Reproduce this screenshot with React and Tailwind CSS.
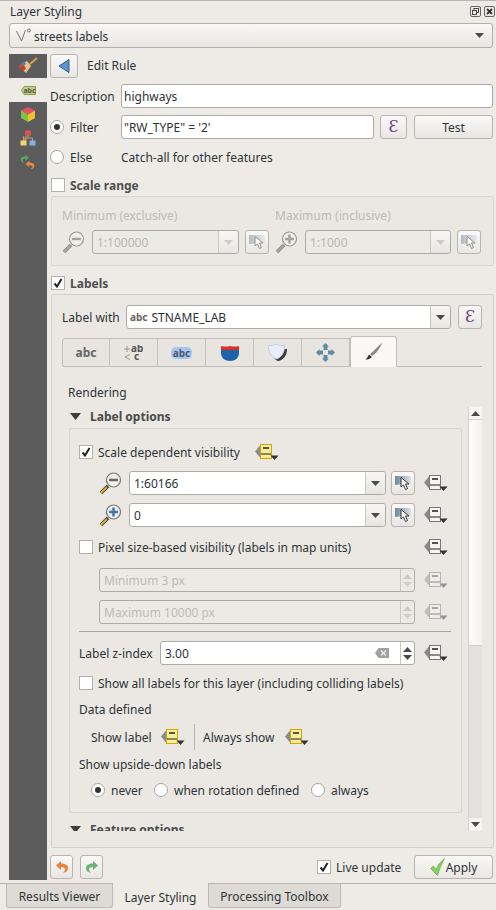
import React from "react";

const TEXT = "text-[#2e3436]";

const Caret = ({ dim }) => (
  <svg width="9" height="5" viewBox="0 0 9 5"><path d="M0 0h9L4.500 5z" fill={dim ? "#cfccc8" : "#4a4a4a"} /></svg>
);

const SectionCaret = () => (
  <svg width="11" height="7" viewBox="0 0 11 7" className="shrink-0"><path d="M0 0h11L5.500 7z" fill="#3d3d3d" /></svg>
);

const Button = ({ className = "", children }) => (
  <div className={`flex items-center justify-center rounded-[3px] border border-[#b8b5b0] bg-gradient-to-b from-[#faf9f8] to-[#e9e6e2] ${className}`}>
    {children}
  </div>
);

const Epsilon = ({ className = "" }) => (
  <Button className={`h-6 shrink-0 font-['DejaVu_Serif',serif] text-[16px] leading-none text-[#6b3f7f] ${className}`}>Ɛ</Button>
);

const Checkbox = ({ checked }) => (
  <div className="flex h-[14px] w-[14px] shrink-0 items-center justify-center border border-[#b5b2ad] bg-white">
    {checked && (
      <svg width="10" height="10" viewBox="0 0 10 10"><path d="M1.500 5.500 4 8.500 8.500 1" fill="none" stroke="#222" strokeWidth="2" /></svg>
    )}
  </div>
);

const Radio = ({ checked }) => (
  <div className="flex h-[14px] w-[14px] shrink-0 items-center justify-center rounded-full border border-[#aaa7a2] bg-white">
    {checked && <div className="h-[6px] w-[6px] rounded-full bg-[#333]" />}
  </div>
);

const ZoomIcon = ({ plus, muted }) => {
  const handle = muted ? "#a8a6a2" : "#e0b020";
  const ring = muted ? "#9a9894" : "#777";
  const sign = muted ? "#a5a39f" : plus ? "#3d78b0" : "#666";
  return (
    <svg width="23" height="24" viewBox="0 0 23 24" className="shrink-0">
      <path d="M2 22 9 15" stroke={muted ? "#8f8d89" : "#333"} strokeWidth="3.500" />
      <path d="M2 22 8 16" stroke={handle} strokeWidth="2" />
      <circle cx="14.500" cy="9" r="7" fill="#f1efec" stroke={ring} strokeWidth="1.200" />
      <path d="M10 9h9" stroke={sign} strokeWidth="2.500" />
      {plus && <path d="M14.500 4.500v9" stroke={sign} strokeWidth="2.500" />}
    </svg>
  );
};

const PickIcon = ({ muted }) => (
  <svg width="17" height="14" viewBox="0 0 17 14" className={muted ? "opacity-50" : ""}>
    <defs>
      <linearGradient id="pickfade" x1="0" x2="1" y1="0" y2="0">
        <stop offset="0" stopColor="#6f8899" />
        <stop offset="1" stopColor="#dfe3e5" />
      </linearGradient>
    </defs>
    <path d="M0 0h16v8H9L0 9z" fill="url(#pickfade)" />
    <path d="M6 1.500 6 11l2.500-2 2 4.500 2-1L10.500 8H14z" fill="#fff" stroke="#333" strokeWidth="1" />
  </svg>
);

const DataDefined = ({ yellow, muted, className = "" }) => (
  <svg width="24" height="17" viewBox="0 0 24 17" className={`shrink-0 ${muted ? "opacity-45" : ""} ${className}`}>
    <path d="M5 1.500v12L0 7.500z" fill="#8a8a8a" />
    <rect x="5.500" y="0.500" width="11" height="14" fill={yellow ? "#f8ee9a" : "#f6f5f3"} stroke={yellow ? "#d2a500" : "#777"} />
    <path d="M8 4h6" stroke="#555" strokeWidth="2" />
    <path d="M6 10h10" stroke="#444" strokeWidth="1.200" />
    <path d="M15.500 11.500h8L19.500 16z" fill="#333" />
  </svg>
);

const Combo = ({ value, muted, className = "" }) => (
  <div className={`flex h-6 min-w-0 items-center rounded-[3px] border border-[#aeaba6] ${muted ? "bg-[#eceae5]" : "bg-white"} ${className}`}>
    <span className={`min-w-0 flex-1 truncate pl-1 ${muted ? "text-[#b9b7b3]" : TEXT}`}>{value}</span>
    <div className="flex h-full w-5 shrink-0 items-center justify-center rounded-r-[3px] border-l border-[#c9c6c1] bg-gradient-to-b from-[#f8f7f6] to-[#e8e5e1]">
      <Caret dim={muted} />
    </div>
  </div>
);

const ScaleCol = ({ label, value, plus }) => (
  <div>
    <div className="flex h-[18px] items-center text-[#bcbab6]"><span>{label}</span></div>
    <div className="mt-[6px] flex items-center">
      <ZoomIcon plus={plus} muted />
      <Combo value={value} muted className="ml-[7px] flex-1" />
      <Button className="ml-[6px] h-6 w-6 shrink-0"><PickIcon muted /></Button>
    </div>
  </div>
);

const ScaleRow = ({ value, plus, className = "" }) => (
  <div className={`flex h-6 items-center pl-5 ${className}`}>
    <ZoomIcon plus={plus} />
    <Combo value={value} className="ml-[7px] w-[257px]" />
    <Button className="ml-[5px] h-6 w-6 shrink-0"><PickIcon /></Button>
    <DataDefined className="ml-[9px]" />
  </div>
);

const SpinRow = ({ value, className = "" }) => (
  <div className={`flex h-6 items-center pl-5 ${className}`}>
    <div className="flex h-6 w-[316px] items-center rounded-[3px] border border-[#aeaba6] bg-[#eceae5] text-[#bcbab6]">
      <span className="flex-1 pl-[4px]">{value}</span>
      <div className="flex h-full w-[14px] flex-col items-center justify-center gap-[3px] border-l border-[#c9c6c1]">
        <div className="rotate-180"><Caret dim /></div>
        <Caret dim />
      </div>
    </div>
    <DataDefined muted className="ml-[9px]" />
  </div>
);

const BrushIcon = () => (
  <svg width="20" height="18" viewBox="0 0 20 18">
    <path d="M12 7 19 1" stroke="#d9a441" strokeWidth="2" />
    <path d="M1 9 9 4l4 5-5 7z" fill="#e9c58b" />
    <path d="M1 9 5 6.500l3 5-3 3z" fill="#c9402f" />
    <path d="M3 6.500l3-2 2 2.500-3 2z" fill="#4a7fb5" />
  </svg>
);

const LabelIcon = () => (
  <svg width="15" height="9" viewBox="0 0 15 9">
    <path d="M3 .5h11.500v8H3L.5 4.500z" fill="#c6cf86" stroke="#8c9a4a" />
    <text x="8.500" y="7" textAnchor="middle" fontSize="7" fontWeight="700" fontFamily="Noto Sans, sans-serif" fill="#4f5a45">abc</text>
  </svg>
);

const CubeIcon = () => (
  <svg width="16" height="17" viewBox="0 0 16 17">
    <path d="M8 1 15 4.500 8 8.500 1 4.500z" fill="#e8505b" />
    <path d="M1 4.500 8 8.500V16L1 12z" fill="#7cc243" />
    <path d="M15 4.500 8 8.500V16L15 12z" fill="#f1c232" />
  </svg>
);

const TreeIcon = () => (
  <svg width="16" height="16" viewBox="0 0 16 16">
    <rect x="5" y="0.500" width="6" height="5" fill="#d9534f" />
    <path d="M8 5v3M3.500 11V8h9v3M5 8v3" stroke="#c79a6a" fill="none" />
    <path d="M3.500 6v5M6 6v5" stroke="#c79a6a" />
    <rect x="0.500" y="10.500" width="6" height="5" fill="#f3d36b" />
    <rect x="9.500" y="10.500" width="6" height="5" fill="#7db3e0" />
  </svg>
);

const ARROW = "M6 1 1 5.500 6 10V7c3 0 4 1 4 2.500 0 1-.5 2-2 3 3.500 0 5-2 5-4.500 0-3-3-4.500-7-4.500z";

const UndoArrow = ({ color, flip }) => (
  <svg width="14" height="14" viewBox="0 0 14 14" className={flip ? "-scale-x-100" : ""}>
    <path d={ARROW} fill={color} />
  </svg>
);

const HistoryIcon = () => (
  <svg width="14" height="15" viewBox="0 0 14 15">
    <g transform="translate(-1 -1) scale(.68)"><path d={ARROW} fill="#5fa36a" transform="matrix(-1 0 0 1 14 0)" /></g>
    <g transform="translate(4 5) scale(.72)"><path d={ARROW} fill="#e88a3c" /></g>
  </svg>
);

const Sidebar = () => (
  <div className="flex w-[38px] shrink-0 flex-col bg-[#5c5c5c]">
    <div className="flex h-6 items-center justify-center"><BrushIcon /></div>
    <div className="flex h-6 items-center justify-center bg-[#eeebe7]"><LabelIcon /></div>
    <div className="flex h-6 items-center justify-center"><CubeIcon /></div>
    <div className="flex h-6 items-center justify-center"><TreeIcon /></div>
    <div className="flex h-6 items-center justify-center"><HistoryIcon /></div>
  </div>
);

const Tab = ({ children, active }) =>
  active ? (
    <div className="flex h-[31px] w-[47px] items-center justify-center rounded-t-[3px] border border-b-0 border-[#c2bfba] bg-[#faf9f7]">{children}</div>
  ) : (
    <div className="flex h-[29px] w-[48px] items-center justify-center border-t border-r border-b border-[#c2bfba] bg-[#e8e5e1] first:rounded-tl-[3px] first:border-l">{children}</div>
  );

const LabelTabs = () => (
  <div className="mt-[7px] flex h-[31px] items-end">
    <Tab><div className="text-[12px] font-bold text-[#666]">abc</div></Tab>
    <Tab>
      <svg width="19" height="16" viewBox="0 0 19 16">
        <path d="M0 4h6M3 1v6" stroke="#999" />
        <path d="M6 9.500 1 12l5 2.500" stroke="#999" fill="none" />
        <text x="7" y="7" fontSize="10" fontWeight="700" fontFamily="Noto Sans, sans-serif" fill="#555">ab</text>
        <text x="10" y="15" fontSize="10" fontWeight="700" fontFamily="Noto Sans, sans-serif" fill="#555">c</text>
      </svg>
    </Tab>
    <Tab>
      <div className="rounded-[5px] bg-[#a9c4ee] px-[2px] text-[10px] font-bold leading-[12px] text-[#4a5a70]">abc</div>
    </Tab>
    <Tab>
      <svg width="18" height="16" viewBox="0 0 18 16">
        <path d="M0 1Q5 2 9 1q4 1 9 0v6H0z" fill="#d8312c" />
        <path d="M0 5h18v3c0 5-4 8-9 8s-9-3-9-8z" fill="#1e63a8" />
      </svg>
    </Tab>
    <Tab>
      <svg width="19" height="17" viewBox="0 0 19 17">
        <path d="M4 5h15c0 7-4 11-8.500 12C7 16.500 4 12 4 5z" fill="#3a3a3a" />
        <path d="M.5 1.500Q4 2 8 .5q4 1.500 8.500 1c.5 7-3 11.500-7.500 13.500C4 14 0 8 .5 1.500z" fill="#e8edfa" stroke="#b9c4e6" strokeWidth=".7" />
      </svg>
    </Tab>
    <Tab>
      <svg width="19" height="19" viewBox="0 0 19 19" fill="#5e8aa3">
        <path d="M9.500 0 13 3.500h-1.500V7h-4V3.500H6z" />
        <path d="M9.500 19 6 15.500h1.500V12h4v3.500H13z" />
        <path d="M0 9.500 3.500 6v1.500H7v4H3.500V13z" />
        <path d="M19 9.500 15.500 13v-1.500H12v-4h3.500V6z" />
      </svg>
    </Tab>
    <Tab active>
      <svg width="18" height="18" viewBox="0 0 18 18">
        <path d="M17 0C15 5 11 11 7 13l-2-2C9 8 13 3 17 0z" fill="#888" />
        <path d="M4 11.500 7 14c-2 2-4 2.500-6.500 2.500C2.500 15 3 13 4 11.500z" fill="#333" />
      </svg>
    </Tab>
    <div className="h-px w-[85px] self-end bg-[#bdbab5]" />
  </div>
);

const InnerGroup = () => (
  <div className={`ml-[7px] h-[385px] w-[393px] rounded-[2px] border border-[#d7d3ce] bg-[#ebe8e4] pl-[9px] ${TEXT}`}>
    <div className="mt-3 flex h-[22px] items-center">
      <Checkbox checked />
      <span className="ml-[5px]">Scale dependent visibility</span>
      <DataDefined yellow className="ml-[15px]" />
    </div>
    <ScaleRow value="1:60166" className="mt-2" />
    <ScaleRow value="0" plus className="mt-2" />
    <div className="mt-[10px] flex h-5 items-center">
      <Checkbox />
      <span className="ml-[5px] w-[326px]">Pixel size-based visibility (labels in map units)</span>
      <DataDefined />
    </div>
    <SpinRow value="Minimum 3 px" className="mt-[11px]" />
    <SpinRow value="Maximum 10000 px" className="mt-2" />
    <div className="mt-[7px] h-px w-[372px] bg-[#aaa7a2]" />
    <div className="mt-[9px] flex h-6 items-center">
      <span className="w-[81px]">Label z-index</span>
      <div className="flex h-6 w-[255px] items-center rounded-[3px] border border-[#aeaba6] bg-white">
        <span className="flex-1 pl-[4px]">3.00</span>
        <svg width="14" height="10" viewBox="0 0 14 10" className="mr-[11px]">
          <path d="M3.500 0H14v10H3.500L0 5z" fill="#a0a0a0" />
          <path d="M6 2.500l5 5M11 2.500l-5 5" stroke="#eee" strokeWidth="1.200" />
        </svg>
        <div className="flex h-full w-[14px] flex-col items-center justify-center gap-[3px] border-l border-[#c9c6c1]">
          <div className="rotate-180"><Caret /></div>
          <Caret />
        </div>
      </div>
      <DataDefined className="ml-[9px]" />
    </div>
    <div className="mt-2 flex h-5 items-center">
      <Checkbox />
      <span className="ml-[5px]">Show all labels for this layer (including colliding labels)</span>
    </div>
    <div className="mt-[6px] flex h-5 items-center"><span>Data defined</span></div>
    <div className="mt-[6px] flex h-6 items-center pl-3">
      <span className="w-[70px]">Show label</span>
      <DataDefined yellow />
      <div className="ml-[9px] h-[26px] w-px bg-[#b5b2ad]" />
      <span className="ml-2 w-[82px]">Always show</span>
      <DataDefined yellow />
    </div>
    <div className="mt-[5px] flex h-5 items-center"><span>Show upside-down labels</span></div>
    <div className="mt-[6px] flex h-5 items-center pl-3">
      <Radio checked />
      <span className="ml-[6px] w-[43px]">never</span>
      <Radio />
      <span className="ml-[6px] w-[137px]">when rotation defined</span>
      <Radio />
      <span className="ml-[6px]">always</span>
    </div>
  </div>
);

const ScrollArea = () => (
  <div className="mt-[5px] flex h-[424px] overflow-hidden">
    <div className={`w-[406px] shrink-0 ${TEXT}`}>
      <div className="mb-[3px] flex h-[18px] items-center pl-2 font-bold">
        <SectionCaret />
        <span className="ml-[9px] text-[#4a4a4a]">Label options</span>
      </div>
      <InnerGroup />
      <div className="mt-[7px] flex h-[18px] items-center pl-2 font-bold">
        <SectionCaret />
        <span className="ml-[9px] text-[#4a4a4a]">Feature options</span>
      </div>
    </div>
    <div className="flex w-[14px] shrink-0 flex-col border-l border-[#d5d2cd] bg-[#e3e1dd]">
      <div className="flex h-[13px] items-center justify-center border-b border-[#d5d2cd] bg-[#f6f5f3]">
        <div className="rotate-180"><Caret /></div>
      </div>
      <div className="h-[226px] border-b border-[#cfccc7] bg-gradient-to-r from-[#fdfdfc] to-[#f4f2ef]" />
      <div className="flex-1" />
      <div className="flex h-[13px] items-center justify-center bg-[#f6f5f3]"><Caret /></div>
    </div>
  </div>
);

export default function App() {
  return (
    <div className={`flex h-[910px] w-[496px] flex-col overflow-hidden border-t border-[#b9b6b1] bg-[#eeebe7] font-['Noto_Sans',sans-serif] text-[12px] [&_span]:translate-y-px ${TEXT}`}>
      <div className="flex h-[21px] shrink-0 items-center justify-between pl-[10px] pr-[1px]">
        <div>Layer Styling</div>
        <div className="flex gap-[3px]">
          <svg width="11" height="11" viewBox="0 0 11 11">
            <rect x=".5" y=".5" width="10" height="10" rx="1.500" fill="none" stroke="#666" />
            <rect x="4" y="2.500" width="4.500" height="4" fill="none" stroke="#444" />
            <rect x="2.500" y="4.500" width="4" height="4" fill="#eeebe7" stroke="#444" />
          </svg>
          <svg width="11" height="11" viewBox="0 0 11 11">
            <rect x=".5" y=".5" width="10" height="10" rx="1.500" fill="none" stroke="#666" />
            <path d="M3 3l5 5M8 3 3 8" stroke="#333" strokeWidth="1.800" />
          </svg>
        </div>
      </div>

      <div className="mx-[9px] mt-[1px] flex h-[25px] w-[484px] shrink-0 items-center rounded-[3px] border border-[#b3b0ab] bg-gradient-to-b from-[#faf9f8] to-[#e9e6e2] pl-[6px] pr-[8px]">
        <svg width="16" height="15" viewBox="0 0 16 15">
          <path d="M.5 3 5.500 13 9.500 2" fill="none" stroke="#777" strokeWidth="1" />
          <circle cx="13" cy="2.500" r="1.500" fill="none" stroke="#777" />
        </svg>
        <span className="ml-[2px] flex-1">streets labels</span>
        <Caret />
      </div>

      <div className="ml-[9px] mt-[6px] flex h-[826px] shrink-0">
        <Sidebar />
        <div className="ml-[3px] flex w-[444px] flex-col">
          <div className="flex h-6 items-center">
            <Button className="h-6 w-[28px]">
              <svg width="12" height="14" viewBox="0 0 12 14"><path d="M11 .5V13.500L1 7z" fill="#5b93cc" stroke="#2e5f94" /></svg>
            </Button>
            <div className="ml-[9px]">Edit Rule</div>
          </div>

          <div className="mt-[6px] flex h-6 items-center">
            <span className="w-[71px]">Description</span>
            <div className="flex h-6 w-[372px] items-center rounded-[3px] border border-[#aeaba6] bg-white pl-[2px]"><span>highways</span></div>
          </div>

          <div className="mt-[7px] flex h-6 items-center">
            <Radio checked />
            <span className="ml-[6px] w-[51px]">Filter</span>
            <div className="flex h-6 w-[253px] items-center rounded-[3px] border border-[#aeaba6] bg-white pl-[2px]"><span>"RW_TYPE" = '2'</span></div>
            <Epsilon className="ml-[6px] w-[27px]" />
            <Button className="ml-[7px] h-6 w-[79px]"><span>Test</span></Button>
          </div>

          <div className="mt-[6px] flex h-6 items-center">
            <Radio />
            <span className="ml-[6px] w-[51px]">Else</span>
            <span>Catch-all for other features</span>
          </div>

          <div className="mt-[6px] flex h-5 items-center pl-[1px]">
            <Checkbox />
            <span className="ml-[5px] font-bold text-[#4f4f4f]">Scale range</span>
          </div>

          <div className="ml-[1px] mt-[1px] grid h-[70px] grid-cols-[207px_206px] gap-x-[6px] rounded-[2px] border border-[#dad6d1] bg-[#ebe8e4] pl-[10px] pt-[9px]">
            <ScaleCol label="Minimum (exclusive)" value="1:100000" />
            <ScaleCol label="Maximum (inclusive)" value="1:1000" plus />
          </div>

          <div className="mt-[7px] flex h-5 items-center pl-[1px]">
            <Checkbox checked />
            <span className="ml-[5px] font-bold text-[#4f4f4f]">Labels</span>
          </div>

          <div className="ml-[1px] mt-[1px] h-[554px] rounded-[2px] border border-[#d5d1cc] bg-[#ebe8e4] pl-[10px] pt-[10px]">
            <div className="flex h-6 items-center">
              <span className="w-[64px]">Label with</span>
              <div className="flex h-6 w-[325px] items-center rounded-[3px] border border-[#aeaba6] bg-white pl-[3px]">
                <div className="text-[10px] font-bold text-[#666]">abc</div>
                <span className="ml-[4px] flex-1">STNAME_LAB</span>
                <div className="flex h-full w-5 items-center justify-center rounded-r-[3px] border-l border-[#c9c6c1] bg-gradient-to-b from-[#f8f7f6] to-[#e8e5e1]"><Caret /></div>
              </div>
              <Epsilon className="ml-[7px] w-6" />
            </div>
            <LabelTabs />
            <div className="ml-[6px] mt-[15px] flex h-5 items-center"><span>Rendering</span></div>
            <ScrollArea />
          </div>

          <div className="mt-[7px] flex h-6 items-center">
            <Button className="h-6 w-[23px]"><UndoArrow color="#e8833a" /></Button>
            <Button className="ml-[7px] h-6 w-[23px]"><UndoArrow color="#6fb27a" flip /></Button>
            <div className="ml-[214px]"><Checkbox checked /></div>
            <span className="ml-[5px] w-[78px]">Live update</span>
            <Button className="h-6 w-[79px]">
              <svg width="15" height="18" viewBox="0 0 15 18"><path d="M.5 10.500 3.500 8l2.500 3.500C8 7 11 3 14.500 .5 12 5 9.500 11 7.500 17.500z" fill="#86d05e" stroke="#5aa53a" strokeWidth=".6" /></svg>
              <span className="ml-[1px]">Apply</span>
            </Button>
          </div>
        </div>
      </div>

      <div className="mt-[3px] flex h-[27px] shrink-0 items-start border-t border-[#b9b6b1] pl-[6px]">
        <div className="flex h-6 w-[107px] items-center justify-center rounded-b-[3px] border border-t-0 border-[#bdb9b4] bg-[#dedbd7]"><span>Results Viewer</span></div>
        <div className="-mt-px flex h-[28px] w-[95px] items-center justify-center bg-[#eeebe7]"><span>Layer Styling</span></div>
        <div className="flex h-6 w-[133px] items-center justify-center rounded-b-[3px] border border-t-0 border-[#bdb9b4] bg-[#dedbd7]"><span>Processing Toolbox</span></div>
      </div>
    </div>
  );
}
